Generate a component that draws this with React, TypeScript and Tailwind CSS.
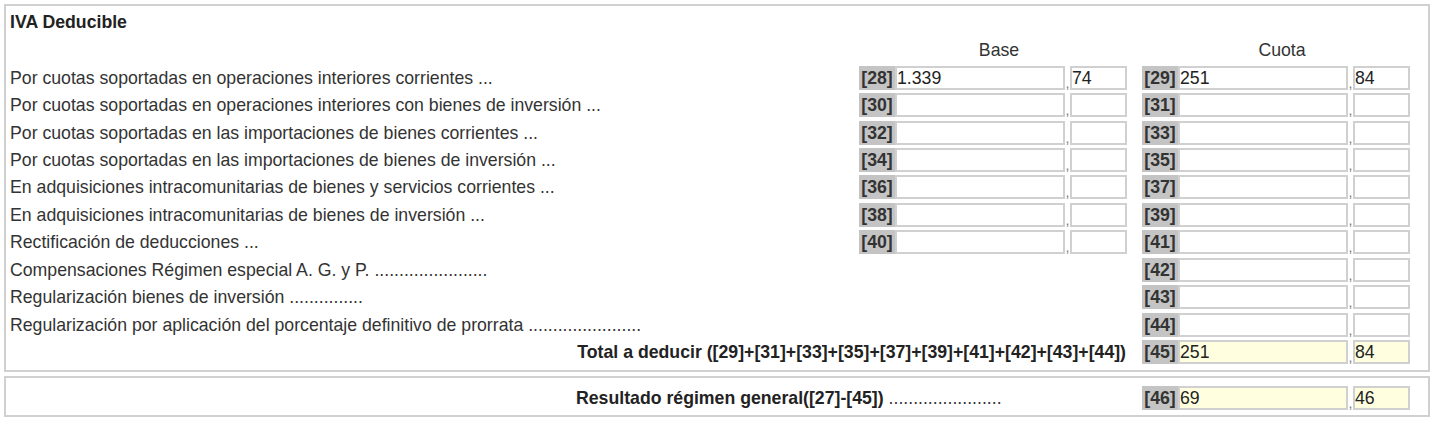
type FieldProps = {
  code: string;
  whole?: string;
  cents?: string;
  total?: boolean;
};

function Field({ code, whole = '', cents = '', total = false }: FieldProps) {
  const bg = total ? 'bg-[#ffffe0]' : 'bg-white';
  return (
    <div className="flex h-[24px] w-[268px] items-stretch">
      <span className="flex w-[36px] items-center justify-center bg-[#c4c4c4] font-bold text-[#333]">
        [{code}]
      </span>
      <div className={`flex w-[170px] items-center border-2 border-[#d0d0d0] px-0 text-[#222] ${bg}`}>
        {whole}
      </div>
      <span className="flex w-[5px] items-end justify-center text-[14px] leading-[14px] text-[#777]">,</span>
      <div className={`flex w-[57px] items-center border-2 border-[#d0d0d0] px-0 text-[#222] ${bg}`}>
        {cents}
      </div>
    </div>
  );
}

type Row = {
  label: string;
  base?: { code: string; whole?: string; cents?: string };
  cuota: { code: string; whole?: string; cents?: string };
};

const rows: Row[] = [
  {
    label: 'Por cuotas soportadas en operaciones interiores corrientes ...',
    base: { code: '28', whole: '1.339', cents: '74' },
    cuota: { code: '29', whole: '251', cents: '84' },
  },
  {
    label: 'Por cuotas soportadas en operaciones interiores con bienes de inversión ...',
    base: { code: '30' },
    cuota: { code: '31' },
  },
  {
    label: 'Por cuotas soportadas en las importaciones de bienes corrientes ...',
    base: { code: '32' },
    cuota: { code: '33' },
  },
  {
    label: 'Por cuotas soportadas en las importaciones de bienes de inversión ...',
    base: { code: '34' },
    cuota: { code: '35' },
  },
  {
    label: 'En adquisiciones intracomunitarias de bienes y servicios corrientes ...',
    base: { code: '36' },
    cuota: { code: '37' },
  },
  {
    label: 'En adquisiciones intracomunitarias de bienes de inversión ...',
    base: { code: '38' },
    cuota: { code: '39' },
  },
  {
    label: 'Rectificación de deducciones ...',
    base: { code: '40' },
    cuota: { code: '41' },
  },
  {
    label: 'Compensaciones Régimen especial A. G. y P. .......................',
    cuota: { code: '42' },
  },
  {
    label: 'Regularización bienes de inversión ...............',
    cuota: { code: '43' },
  },
  {
    label: 'Regularización por aplicación del porcentaje definitivo de prorrata .......................',
    cuota: { code: '44' },
  },
];

export default function App() {
  return (
    <div className="min-h-screen bg-white pl-[4px] pr-[6px] pt-[4px] font-['Liberation_Sans',Arial,sans-serif] text-[17.7px] leading-[20px] text-[#333]">
      {/* IVA deducible */}
      <div className="border-2 border-[#d0d0d0] pb-[4px] pl-[4px] pr-[18px] pt-[6px]">
        <h3 className="h-[20px] font-bold text-[#222]">IVA Deducible</h3>

        <div className="mt-[8px] flex h-[24px]">
          <div className="flex-1" />
          <div className="w-[268px] pl-[12px] text-center">Base</div>
          <div className="w-[15px]" />
          <div className="w-[268px] pl-[12px] text-center">Cuota</div>
        </div>

        {rows.map((r) => (
          <div key={r.cuota.code} className="flex h-[27.43px] items-center">
            <div className="flex-1 truncate">{r.label}</div>
            <div className="w-[268px]">{r.base && <Field {...r.base} />}</div>
            <div className="w-[15px]" />
            <Field {...r.cuota} />
          </div>
        ))}

        <div className="flex h-[27.43px] items-center">
          <div className="flex-1 pr-[1px] text-right font-bold text-[#222]">
            Total a deducir ([29]+[31]+[33]+[35]+[37]+[39]+[41]+[42]+[43]+[44])
          </div>
          <div className="w-[15px]" />
          <Field code="45" whole="251" cents="84" total />
        </div>
      </div>

      {/* Resultado */}
      <div className="mt-[4px] flex items-center border-2 border-[#d0d0d0] pb-[5px] pl-[4px] pr-[18px] pt-[8px]">
        <div className="flex-1 pl-[566px]">
          <span className="font-bold text-[#222]">Resultado régimen general([27]-[45])</span> .......................
        </div>
        <Field code="46" whole="69" cents="46" total />
      </div>
    </div>
  );
}
